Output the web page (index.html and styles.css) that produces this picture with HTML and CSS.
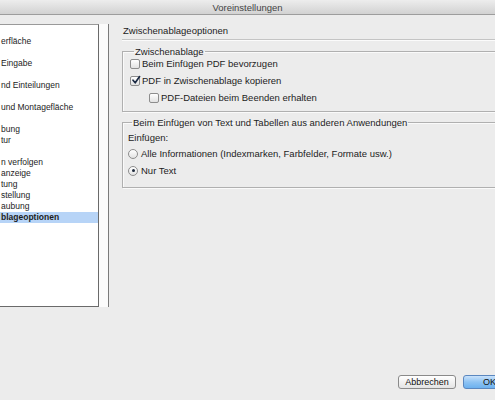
FILE: index.html
```html
<!DOCTYPE html>
<html lang="de">
<head>
<meta charset="utf-8">
<title>Voreinstellungen</title>
<link rel="stylesheet" href="styles.css">
</head>
<body>
<div class="window">
  <div class="titlebar">Voreinstellungen</div>
  <div class="content">
    <div class="sidebar">
      <ul class="list">
        <li>&nbsp;</li>
        <li>erfläche</li>
        <li>&nbsp;</li>
        <li>Eingabe</li>
        <li>&nbsp;</li>
        <li>nd Einteilungen</li>
        <li>&nbsp;</li>
        <li>und Montagefläche</li>
        <li>&nbsp;</li>
        <li>bung</li>
        <li>tur</li>
        <li>&nbsp;</li>
        <li>n verfolgen</li>
        <li>anzeige</li>
        <li>tung</li>
        <li>stellung</li>
        <li>aubung</li>
        <li class="selected">blageoptionen</li>
      </ul>
      <div class="scrollstrip"></div>
    </div>
    <div class="panel">
      <div class="panel-title">Zwischenablageoptionen</div>
      <fieldset class="group group-clip">
        <legend>Zwischenablage</legend>
        <label class="opt"><span class="check"></span>Beim Einfügen PDF bevorzugen</label>
        <label class="opt"><span class="check checked"><svg viewBox="0 0 10 10" width="10" height="10"><path d="M2 5.2 L4.2 7.8 L8.6 1.6" fill="none" stroke="#1b2a44" stroke-width="1.7" stroke-linecap="round" stroke-linejoin="round"/></svg></span>PDF in Zwischenablage kopieren</label>
        <label class="opt sub"><span class="check"></span>PDF-Dateien beim Beenden erhalten</label>
      </fieldset>
      <fieldset class="group group-paste">
        <legend>Beim Einfügen von Text und Tabellen aus anderen Anwendungen</legend>
        <div class="caption">Einfügen:</div>
        <label class="opt"><span class="radio"></span>Alle Informationen (Indexmarken, Farbfelder, Formate usw.)</label>
        <label class="opt"><span class="radio on"></span>Nur Text</label>
      </fieldset>
    </div>
  </div>
  <div class="buttons">
    <button class="btn">Abbrechen</button>
    <button class="btn default">OK</button>
  </div>
</div>
</body>
</html>
```
FILE: styles.css
```css
html, body {
  margin: 0;
  padding: 0;
  width: 495px;
  height: 400px;
  overflow: hidden;
  background: #ececec;
}
body {
  font-family: "Lucida Grande", "Liberation Sans", Arial, sans-serif;
  font-size: 9px;
  color: #1c1c1c;
}
.window {
  width: 495px;
  height: 400px;
  display: flex;
  flex-direction: column;
}
.titlebar {
  height: 14px;
  line-height: 15px;
  text-align: center;
  font-size: 9.5px;
  color: #444;
  background: linear-gradient(#ededed, #d2d2d2);
  border-bottom: 1px solid #9d9d9d;
  flex: none;
}
.content {
  display: flex;
  flex: none;
  height: 358px;
}
.sidebar {
  display: flex;
  margin-top: 9px;
  height: 283px;
}
.list {
  list-style: none;
  margin: 0;
  padding: 0;
  width: 98px;
  height: 281px;
  background: #fff;
  border-top: 1px solid #9a9a9a;
  border-right: 1px solid #6a6a6a;
  border-bottom: 1px solid #6a6a6a;
  overflow: hidden;
}
.list li {
  height: 11px;
  line-height: 11px;
  font-size: 8.5px;
  white-space: nowrap;
  padding-left: 1px;
}
.list li.selected {
  background: #b7d4f7;
  font-weight: bold;
}
.scrollstrip {
  width: 9px;
  height: 283px;
  background: #fbfbfb;
  border-right: 1px solid #7a7a7a;
}
.panel {
  flex: 1;
  padding-left: 13px;
  min-width: 0;
}
.panel-title {
  margin-top: 10px;
  font-size: 9.5px;
  padding-left: 1px;
  height: 14px;
  line-height: 12px;
  border-bottom: 1px solid #c4c4c4;
  box-shadow: 0 1px 0 #fbfbfb;
  margin-right: -20px;
}
.group {
  margin: 0 -30px 0 0;
  padding: 0 0 0 7px;
  border: 1px solid #b0b0b0;
  box-shadow: inset 1px 1px 0 #fafafa, 1px 1px 0 #fafafa;
}
.group legend {
  padding: 0 1px;
  margin-left: 4px;
  font-size: 9.5px;
  line-height: 11px;
  height: 11px;
}
.group-clip {
  margin-top: 6px;
  padding-bottom: 5px;
}
.group-paste {
  margin-top: 5px;
  padding-left: 5px;
  padding-bottom: 8px;
}
.opt {
  display: flex;
  align-items: center;
  height: 17px;
  white-space: nowrap;
  font-size: 9.5px;
}
.group-clip .opt:first-of-type {
  margin-top: -2px;
}
.opt.sub {
  padding-left: 19px;
}
.check {
  width: 8px;
  height: 8px;
  border: 1px solid #8d8d8d;
  border-radius: 2px;
  background: linear-gradient(#ffffff, #e2e2e2);
  margin-right: 2px;
  position: relative;
  flex: none;
}
.check svg {
  position: absolute;
  left: 0;
  top: -2px;
}
.radio {
  width: 8px;
  height: 8px;
  border: 1px solid #8d8d8d;
  border-radius: 50%;
  background: linear-gradient(#ffffff, #e2e2e2);
  margin-right: 3px;
  position: relative;
  flex: none;
}
.radio.on::after {
  content: "";
  position: absolute;
  left: 2.5px;
  top: 2.5px;
  width: 3px;
  height: 3px;
  border-radius: 50%;
  background: #1e2a3c;
}
.caption {
  height: 14px;
  padding-top: 3px;
  line-height: 14px;
  font-size: 9.5px;
}
.buttons {
  flex: none;
  display: flex;
  justify-content: flex-end;
  gap: 7px;
  padding-top: 2px;
  margin-right: -26px;
}
.btn {
  font-family: inherit;
  font-size: 9px;
  height: 14px;
  line-height: 12px;
  padding: 0 5px;
  border: 1px solid #8a8a8a;
  border-radius: 3px;
  background: linear-gradient(#ffffff, #f1f1f1 50%, #e4e4e4);
  color: #111;
  width: 58px;
}
.btn.default {
  text-align: left;
  padding-left: 19px;
  background: linear-gradient(#c9e2fb, #8ec3f3 50%, #6cb1ef);
  border-color: #5b87bf;
}
```
